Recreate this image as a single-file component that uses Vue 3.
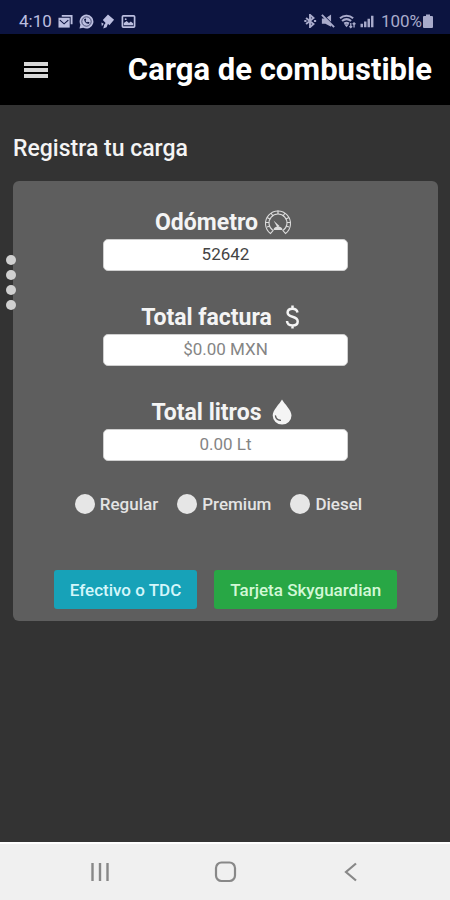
<template>
  <div class="screen">
    <div class="status-bar">
      <div class="status-group">
        <span class="clock">4:10</span>
        <svg class="status-icon" viewBox="0 0 16 16">
          <path d="M4 1h11.500v10h-2V3H4z" fill="currentColor" />
          <path d="M0.500 4h12v10.500h-12z" fill="currentColor" />
          <path d="M2 6.500l4.500 4L11 6.500" fill="none" stroke="#0c1440" stroke-width="1.200" />
        </svg>
        <svg class="status-icon" viewBox="0 0 16 16">
          <path d="M8 0.500a7.500 7.500 0 1 1-3.500 14.200L0.500 15.500l1-4A7.500 7.500 0 0 1 8 0.500z" fill="currentColor" />
          <circle cx="8" cy="8" r="5" fill="none" stroke="#0c1440" stroke-width="0.700" />
          <path d="M5.500 5.200c0 3 2.200 5.300 5.300 5.300l.3-1.700-1.700-.6-.9.800c-.8-.4-1.300-1-1.600-1.700l.8-.9-.5-1.700z" fill="#0c1440" />
        </svg>
        <svg class="status-icon" viewBox="0 0 16 16">
          <path d="M8.500 0.500L15 6l-5 6-1.500-1.500-1.500 3.500-3.500 1.500 1-4L6 9.500 3 6.500z" fill="currentColor" />
          <path d="M1.500 9l2.500 1.500L2 13z" fill="currentColor" />
        </svg>
        <svg class="status-icon" viewBox="0 0 16 16">
          <rect x="1.500" y="2" width="13" height="12" rx="1" fill="none" stroke="currentColor" stroke-width="1.800" />
          <path d="M3 12V9.500l3-2 2.500 2 2-1.500L13 10v2z" fill="currentColor" />
          <circle cx="5" cy="5.500" r="1" fill="currentColor" />
        </svg>
      </div>
      <div class="status-group right">
        <svg class="status-icon" viewBox="0 0 16 16">
          <path d="M3.500 4.500l8.500 7L8 15V1l4 3.500-8.500 7" fill="none" stroke="currentColor" stroke-width="2.200" />
          <path d="M1.500 8h2.500M12.500 8H15" stroke="currentColor" stroke-width="2.200" />
        </svg>
        <svg class="status-icon" viewBox="0 0 16 16">
          <path d="M1 5h4L11.500 0.500v14L5 11H1z" fill="currentColor" />
          <path d="M2 0.500l14 14" stroke="#0c1440" stroke-width="1.500" />
          <path d="M1 1l14 14" stroke="currentColor" stroke-width="2.200" />
        </svg>
        <svg class="status-icon wifi-icon" viewBox="0 0 18 16">
          <path d="M1 4.500C5 1 11 1 15 4.500M3.200 7.500c3-2.600 6.600-2.600 9.600 0M5.500 10.200c1.600-1.200 3.400-1.200 5 0" fill="none" stroke="currentColor" stroke-width="2.200" />
          <path d="M5.500 11h5l-2.500 3z" fill="currentColor" />
          <path d="M12.500 9.500v5M11 13l1.500 1.500L14 13M16 14.500v-5M14.500 11L16 9.500l1.500 1.500" fill="none" stroke="currentColor" stroke-width="1.400" />
        </svg>
        <svg class="status-icon" viewBox="0 0 16 16">
          <path d="M2 11v4M6 8.500V15M10 5.500V15M14 2v13" stroke="currentColor" stroke-width="2.800" />
        </svg>
        <span class="battery-text">100%</span>
        <svg class="battery" viewBox="0 0 10 14">
          <path d="M3 0.500h4V2h2a1 1 0 0 1 1 1v10a1 1 0 0 1-1 1H1a1 1 0 0 1-1-1V3a1 1 0 0 1 1-1h2z" fill="currentColor" />
        </svg>
      </div>
    </div>

    <header class="app-bar">
      <button class="menu-button" type="button" aria-label="Menú">
        <span></span>
        <span></span>
        <span></span>
      </button>
      <h1>Carga de combustible</h1>
    </header>

    <main class="content">
      <h2>Registra tu carga</h2>

      <form class="card" @submit.prevent>
        <div class="side-dots">
          <i v-for="n in 4" :key="n"></i>
        </div>

        <div class="field">
          <label for="odometro">
            Odómetro
            <svg class="label-icon gauge" viewBox="0 0 28 26">
              <path d="M6.500 24.500A12.500 12.500 0 1 1 21.500 24.500L19 21.500A9 9 0 1 0 9 21.500z" fill="none" stroke="currentColor" stroke-width="1.100" />
              <path d="M3 18l3-1M1.500 13.500h3.500M3 8.500l3 1.500M7 4l2 3M14 1.500V5M21 4l-2 3M25 8.500L22 10M26.500 13.500H23M25 18l-3-1" stroke="currentColor" stroke-width="1.200" />
              <path d="M9.500 11.500l6 5.500-2 1.500z" fill="currentColor" />
              <path d="M9.500 21c0-2 2-3.500 4.500-3.500s4.500 1.500 4.500 3.500z" fill="currentColor" />
            </svg>
          </label>
          <input id="odometro" v-model="odometro" type="text" inputmode="numeric" />
        </div>

        <div class="field">
          <label for="factura">
            Total factura
            <svg class="label-icon" viewBox="0 0 28 26">
              <path d="M19.500 8.500c-.4-2.400-2.300-3.800-5-3.800-2.900 0-4.900 1.500-4.900 3.900 0 2.500 2 3.400 4.900 4.200 3.200.9 5.200 2 5.200 4.600s-2.200 4-5.200 4-5.300-1.600-5.500-4.400M14.500 1.500v3.500M14.500 21v3.500" fill="none" stroke="currentColor" stroke-width="2.500" />
            </svg>
          </label>
          <input id="factura" v-model="factura" type="text" placeholder="$0.00 MXN" />
        </div>

        <div class="field">
          <label for="litros">
            Total litros
            <svg class="label-icon" viewBox="0 0 28 26">
              <path d="M14 0.500C16.500 5 23.500 11 23.500 16.500a9.300 9 0 0 1-18.800 0C4.700 11 11.500 5 14 0.500z" fill="currentColor" />
              <path d="M7.500 17c.4 2.500 2.200 4 4.800 4.300" fill="none" stroke="#5e5e5e" stroke-width="1.500" stroke-linecap="round" />
            </svg>
          </label>
          <input id="litros" v-model="litros" type="text" placeholder="0.00 Lt" />
        </div>

        <div class="fuel-types">
          <label v-for="tipo in tipos" :key="tipo">
            <input v-model="combustible" type="radio" name="combustible" :value="tipo" />
            {{ tipo }}
          </label>
        </div>

        <div class="actions">
          <button class="btn cash" type="button">Efectivo o TDC</button>
          <button class="btn credit" type="button">Tarjeta Skyguardian</button>
        </div>
      </form>
    </main>

    <nav class="nav-bar">
      <button type="button" aria-label="Recientes">
        <svg viewBox="0 0 24 24">
          <path d="M4.500 3v18M12 3v18M19.500 3v18" stroke="currentColor" stroke-width="2.400" />
        </svg>
      </button>
      <button type="button" aria-label="Inicio">
        <svg viewBox="0 0 24 24">
          <rect x="3" y="2.500" width="19" height="18.500" rx="5.500" fill="none" stroke="currentColor" stroke-width="2.200" />
        </svg>
      </button>
      <button type="button" aria-label="Atrás">
        <svg viewBox="0 0 24 24">
          <path d="M18 3.500L8 12l10 8.500" fill="none" stroke="currentColor" stroke-width="2.200" />
        </svg>
      </button>
    </nav>
  </div>
</template>

<script setup>
import { ref } from 'vue';

const odometro = ref('52642');
const factura = ref('');
const litros = ref('');
const combustible = ref('');
const tipos = ['Regular', 'Premium', 'Diesel'];
</script>

<style>
body {
  margin: 0;
  background: #333333;
}
</style>

<style scoped>
* {
  box-sizing: border-box;
}

.screen {
  display: flex;
  flex-direction: column;
  min-height: 100vh;
  background: #333333;
  color: #f4f4f4;
  font-family: Roboto, "Liberation Sans", sans-serif;
}

button,
input {
  font-family: inherit;
}

/* Barra de estado */
.status-bar {
  display: flex;
  justify-content: space-between;
  align-items: center;
  height: 34px;
  padding: 8px 17px 0 19px;
  background: #0c1440;
  color: #bcbfe0;
  font-size: 17px;
}

.status-group {
  display: flex;
  align-items: center;
  gap: 6px;
}

.status-group.right {
  gap: 4px;
  color: #a9abcb;
}

.status-icon {
  flex: none;
  width: 15px;
  height: 15px;
}

.right .status-icon {
  width: 14px;
  height: 14px;
}

.right .wifi-icon {
  width: 17px;
  height: 15px;
}

.battery-text {
  margin-left: 3px;
}

.battery {
  width: 10px;
  height: 14px;
  margin-left: -3px;
}

/* Encabezado */
.app-bar {
  display: flex;
  justify-content: space-between;
  align-items: center;
  height: 71px;
  padding: 0 18px 0 24px;
  background: #000000;
}

.menu-button {
  display: flex;
  flex-direction: column;
  gap: 2px;
  padding: 0;
  border: 0;
  background: none;
}

.menu-button span {
  width: 24px;
  height: 4px;
  background: #d8d8d8;
}

h1 {
  margin: 0;
  color: #ffffff;
  font-size: 31px;
  font-weight: 700;
}

/* Formulario */
.content {
  flex: 1;
  padding: 28px 12px 28px 13px;
}

h2 {
  margin: 0 0 16px;
  font-size: 23px;
  line-height: 32px;
  font-weight: 500;
}

.card {
  position: relative;
  display: flex;
  flex-direction: column;
  align-items: center;
  padding: 26px 12px 12px;
  border-radius: 6px;
  background: #5e5e5e;
}

.side-dots {
  position: absolute;
  top: 74px;
  left: -7px;
  display: flex;
  flex-direction: column;
  gap: 5px;
}

.side-dots i {
  width: 10px;
  height: 10px;
  border-radius: 50%;
  background: #d0d0d0;
}

.field {
  display: flex;
  flex-direction: column;
  align-items: center;
  gap: 2px;
  width: 61%;
  margin-bottom: 31px;
}

.field label {
  display: flex;
  align-items: center;
  gap: 6px;
  height: 30px;
  padding-right: 4px;
  font-size: 23px;
  font-weight: 700;
  white-space: nowrap;
}

.label-icon {
  width: 28px;
  height: 26px;
}

.gauge {
  color: #dcdcdc;
}

.field input {
  width: 100%;
  height: 32px;
  padding: 0 8px 2px;
  border: 1px solid #cfcfcf;
  border-radius: 5px;
  background: #ffffff;
  color: #444444;
  font-size: 17px;
  text-align: center;
}

.field input::placeholder {
  color: #858585;
  opacity: 1;
}

.fuel-types {
  display: flex;
  gap: 19px;
  padding-right: 14px;
  margin-bottom: 54px;
}

.fuel-types label {
  display: flex;
  align-items: center;
  gap: 5px;
  height: 24px;
  color: #e4e4e4;
  font-size: 17px;
  font-weight: 500;
}

.fuel-types input {
  appearance: none;
  width: 20px;
  height: 20px;
  margin: 0;
  border-radius: 50%;
  background: #e6e6e6;
}

.fuel-types input:checked {
  border: 5px solid #17a2b8;
}

.actions {
  display: flex;
  gap: 17px;
}

.btn {
  height: 39px;
  padding: 0 16px;
  border: 0;
  border-radius: 3px;
  font-size: 17px;
  font-weight: 500;
  white-space: nowrap;
}

.cash {
  background: #17a2b8;
  color: #d4f6fa;
}

.credit {
  background: #28a745;
  color: #d2f8d6;
}

/* Botones de navegación */
.nav-bar {
  display: flex;
  justify-content: space-around;
  align-items: center;
  height: 58px;
  padding: 0 37px;
  border-top: 2px solid #ffffff;
  background: #f0f0f0;
}

.nav-bar button {
  display: flex;
  padding: 0;
  border: 0;
  background: none;
  color: #888888;
}

.nav-bar svg {
  width: 24px;
  height: 24px;
}
</style>
